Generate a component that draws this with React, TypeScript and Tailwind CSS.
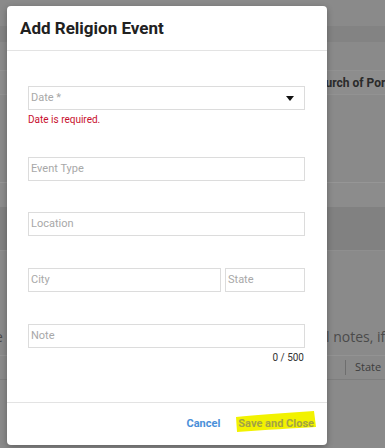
import React from 'react';

const Field = ({ label, className = '' }: { label: string; className?: string }) => (
  <div className={`h-[24px] border border-[#dcdcdc] flex items-center pl-[2px] text-[11px] text-[#a8a8a8] ${className}`}>
    {label}
  </div>
);

const Background = () => (
  <div className="w-[385px] h-[448px] bg-[#8a8a8a] flex flex-col font-['Open_Sans',sans-serif] overflow-hidden">
    <div className="h-[26px] shrink-0" />
    <div className="h-[16px] shrink-0 bg-[#838383]" />
    <div className="h-[29px] shrink-0 border-b border-[#929292]" />
    <div className="h-[24px] shrink-0 flex items-center pl-[311px] bg-[#8d8d8d] border-b border-[#929292] whitespace-nowrap font-['Roboto',sans-serif] font-bold text-[12px] text-[#2a2a2a]">
      Church of Portland
    </div>
    <div className="h-[88px] shrink-0 border-b border-[#969696]" />
    <div className="h-[24px] shrink-0 bg-[#8c8c8c]" />
    <div className="h-[44px] shrink-0 bg-[#818181] border-b border-[#8f8f8f]" />
    <div className="h-[105px] shrink-0 flex items-end pb-[8px] border-b border-[#939393] text-[14px] text-[#4a4a4a] whitespace-nowrap">
      <span className="w-[331px] shrink-0 -ml-[5px]">e</span>
      <span className="shrink-0">l notes, if needed</span>
    </div>
    <div className="h-[24px] shrink-0 flex items-center border-b border-[#7e7e7e] text-[11px] text-[#3d3d3d]">
      <div className="ml-[345px] h-[15px] border-l border-[#6e6e6e]" />
      <span className="ml-[9px]">State</span>
    </div>
    <div className="flex-1" />
  </div>
);

export default function App() {
  return (
    <div className="relative w-[385px] h-[448px] overflow-hidden">
      <Background />
      <div className="absolute left-[7px] top-[6px] w-[320px] h-[439px] bg-white rounded-[4px] shadow-[0_2px_6px_rgba(0,0,0,0.3)] flex flex-col font-['Roboto',sans-serif]">
        <div className="h-[45px] shrink-0 border-b border-[#e3e3e3] flex items-center pl-[13px] pt-[1px] text-[17px] font-bold text-[#212121]">
          Add Religion Event
        </div>
        <div className="pl-[21px] pr-[22px] pt-[35px] flex flex-col">
          <div className="h-[24px] border border-[#dcdcdc] flex items-center justify-between pl-[2px] pr-[10px] text-[11px] text-[#a8a8a8]">
            <span>Date *</span>
            <svg width="8" height="5" viewBox="0 0 8 5">
              <path d="M0 0 L8 0 L4 5 Z" fill="#111" />
            </svg>
          </div>
          <div className="mt-[3px] text-[10px] leading-[14px] text-[#c8102e]">Date is required.</div>
          <Field label="Event Type" className="mt-[30px]" />
          <Field label="Location" className="mt-[31px]" />
          <div className="mt-[32px] flex gap-[4px]">
            <Field label="City" className="flex-1" />
            <Field label="State" className="w-[80px]" />
          </div>
          <Field label="Note" className="mt-[32px]" />
          <div className="mt-[3px] text-right pr-[1px] text-[10px] leading-[14px] text-[#333]">0 / 500</div>
        </div>
        <div className="mt-auto h-[43px] shrink-0 border-t border-[#e3e3e3] flex items-center justify-end pr-[12px] gap-[17px] text-[11px] font-bold">
          <span className="text-[#4a90d9]">Cancel</span>
          <span className="relative px-[1px]">
            <svg className="absolute -left-[2px] -top-[5px]" width="82" height="22" viewBox="0 0 82 22">
              <path d="M1 6 C20 4 50 2 79 0 L81 16 C60 17 30 19 2 21 Z" fill="#f2f200" />
            </svg>
            <span className="relative text-[#a3a345]">Save and Close</span>
          </span>
        </div>
      </div>
    </div>
  );
}
